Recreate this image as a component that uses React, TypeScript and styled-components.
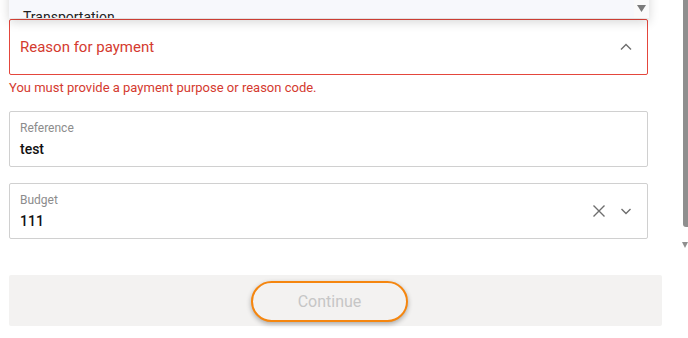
import React from "react";
import styled, { createGlobalStyle } from "styled-components";

const Global = createGlobalStyle`
  html, body { margin: 0; padding: 0; background: #ffffff; overflow: hidden; }
  body { font-family: Roboto, "Liberation Sans", Arial, sans-serif; }
  * { box-sizing: border-box; }
`;

const Page = styled.div`
  position: relative;
  width: 688px;
  height: 338px;
  padding: 19px 0 0 9px;
  display: flex;
  flex-direction: column;
`;

const Menu = styled.div`
  position: absolute;
  left: 9px;
  top: -20px;
  width: 640px;
  height: 38px;
  background: #f7f8fc;
  box-shadow: 0 4px 10px rgba(0, 0, 0, 0.16);
  overflow: hidden;
  display: flex;
  z-index: 2;
`;

const MenuList = styled.div`
  flex: 1;
  padding: 29px 0 0 14px;
  font-size: 14px;
  color: #222;
  line-height: 16px;
`;

const MenuScroll = styled.div`
  width: 15px;
  background: #fafafa;
  display: flex;
  align-items: flex-end;
  justify-content: center;
  padding-bottom: 6px;
`;

const Field = styled.div<{ $error?: boolean }>`
  width: 639px;
  height: 56px;
  flex: none;
  border: 1px solid ${(p) => (p.$error ? "#e4463c" : "#d0d0d0")};
  border-radius: 2px;
  background: #fff;
  display: flex;
  align-items: center;
  padding: 0 14px 0 10px;
`;

const FieldBody = styled.div`
  flex: 1;
  display: flex;
  flex-direction: column;
  gap: 5px;
`;

const Placeholder = styled.div`
  font-size: 15px;
  color: #d43a2f;
`;

const Label = styled.div`
  font-size: 12px;
  color: #8c8c8c;
  line-height: 14px;
`;

const Value = styled.div`
  font-size: 14px;
  font-weight: 500;
  color: #111;
  line-height: 18px;
`;

const Icons = styled.div`
  display: flex;
  align-items: center;
  gap: 13px;
  color: #6e6e6e;
`;

const ErrorText = styled.div`
  margin: 5px 0 16px;
  font-size: 13px;
  color: #d43a2f;
  line-height: 15px;
`;

const Spacer = styled.div<{ $h: number }>`
  height: ${(p) => p.$h}px;
  flex: none;
`;

const Footer = styled.div`
  width: 653px;
  height: 51px;
  flex: none;
  background: #f3f2f1;
  border-radius: 2px;
  display: flex;
  justify-content: center;
  padding-top: 6px;
  padding-right: 12px;
`;

const Button = styled.button`
  width: 157px;
  height: 41px;
  border: 2px solid #f5860f;
  border-radius: 21px;
  background: #f3f2f1;
  box-shadow: 0 2px 5px rgba(0, 0, 0, 0.3);
  font-family: Roboto, "Liberation Sans", Arial, sans-serif;
  font-size: 16px;
  color: #c6c6c6;
  padding: 0;
`;

const ScrollThumb = styled.div`
  position: absolute;
  right: 0;
  top: 0;
  width: 5px;
  height: 227px;
  background: #8f8f8f;
  border-bottom-left-radius: 3px;
`;

const ScrollArrow = styled.div`
  position: absolute;
  right: 0;
  top: 242px;
  width: 0;
  height: 0;
  border-left: 3px solid transparent;
  border-right: 3px solid transparent;
  border-top: 6px solid #8f8f8f;
`;

const Chevron = ({ up }: { up?: boolean }) => (
  <svg width="14" height="14" viewBox="0 0 14 14" fill="none" stroke="currentColor" strokeWidth="1.4">
    {up ? <path d="M2 9.5 L7 4.5 L12 9.5" /> : <path d="M2.5 5 L7 9.5 L11.5 5" />}
  </svg>
);

const Cross = () => (
  <svg width="14" height="14" viewBox="0 0 14 14" fill="none" stroke="currentColor" strokeWidth="1.4">
    <path d="M1.5 1.5 L12.5 12.5 M12.5 1.5 L1.5 12.5" />
  </svg>
);

export default function App() {
  return (
    <>
      <Global />
      <Page>
        <Menu>
          <MenuList>Transportation</MenuList>
          <MenuScroll>
            <svg width="9" height="7" viewBox="0 0 9 7">
              <path d="M0 0 H9 L4.5 7 Z" fill="#7a7a7a" />
            </svg>
          </MenuScroll>
        </Menu>
        <Field $error>
          <FieldBody>
            <Placeholder>Reason for payment</Placeholder>
          </FieldBody>
          <Icons>
            <Chevron up />
          </Icons>
        </Field>
        <ErrorText>You must provide a payment purpose or reason code.</ErrorText>
        <Field>
          <FieldBody>
            <Label>Reference</Label>
            <Value>test</Value>
          </FieldBody>
        </Field>
        <Spacer $h={16} />
        <Field>
          <FieldBody>
            <Label>Budget</Label>
            <Value>111</Value>
          </FieldBody>
          <Icons>
            <Cross />
            <Chevron />
          </Icons>
        </Field>
        <Spacer $h={36} />
        <Footer>
          <Button>Continue</Button>
        </Footer>
        <ScrollThumb />
        <ScrollArrow />
      </Page>
    </>
  );
}
